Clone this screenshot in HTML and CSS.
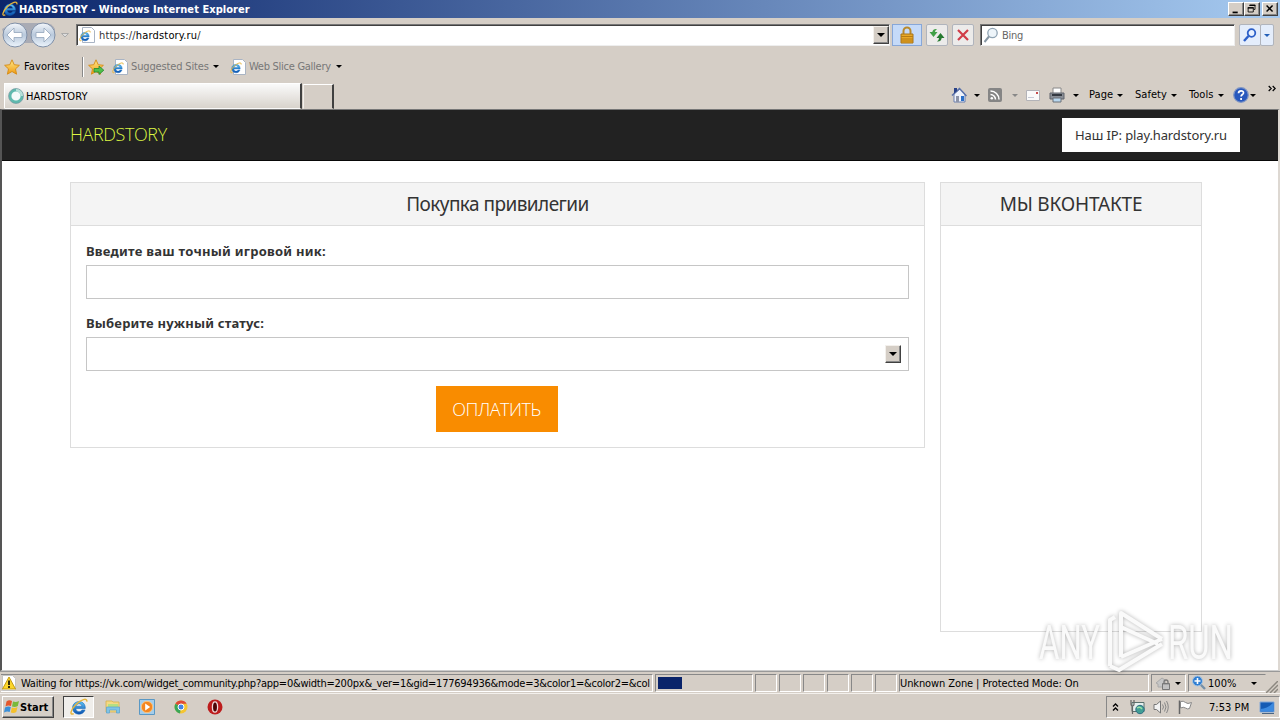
FILE: index.html
```html
<!DOCTYPE html>
<html lang="ru">
<head>
<meta charset="utf-8">
<title>HARDSTORY - Windows Internet Explorer</title>
<link rel="stylesheet" href="styles.css">
</head>
<body>
<svg class="defs" width="0" height="0">
  <defs>
    <linearGradient id="globe" x1="0" y1="0" x2="0" y2="1"><stop offset="0" stop-color="#5ec4f5"/><stop offset="1" stop-color="#0a4fae"/></linearGradient>
    <linearGradient id="gold" x1="0" y1="0" x2="0" y2="1"><stop offset="0" stop-color="#ffe98a"/><stop offset="1" stop-color="#f09a10"/></linearGradient>
    <linearGradient id="orb" x1="0" y1="0" x2="0" y2="1"><stop offset="0" stop-color="#f4f7fb"/><stop offset=".5" stop-color="#b9c9dc"/><stop offset="1" stop-color="#edf5fc"/></linearGradient>
    <symbol id="ie" viewBox="0 0 16 16">
      <path d="M13.6 9.3H5.2c.2 3.4 4.4 3.6 5.4 1.3h2.8C11.5 16.200 2.300 15.600 2.300 8.700 2.300 1.600 13.900.8 13.600 9.300zM5.300 7.300h5.300C10.300 4.300 5.700 4.400 5.300 7.300z" fill="url(#globe)" stroke="#1465b8" stroke-width=".5"/>
      <path d="M3.300 13.800C-.7 16 .5 10.300 5.300 5.700 9.500 1.700 15.600-.8 14.900 3.300" fill="none" stroke="#e6b53c" stroke-width="1.300"/>
    </symbol>
    <symbol id="iepage" viewBox="0 0 16 16"><path d="M3.500.5h9l3 3v12h-12z" fill="#fff" stroke="#a9b4c4"/><svg x="0" y="3" width="12" height="12" viewBox="0 0 16 16"><use href="#ie"/></svg></symbol>
    <symbol id="star" viewBox="0 0 16 16"><path d="M8 .8l2.200 4.900 5.200.6-3.900 3.600 1.100 5.300L8 12.500l-4.600 2.700 1.100-5.300L.6 6.300l5.200-.6z" fill="url(#gold)" stroke="#d58a14" stroke-width=".9"/></symbol>
  </defs>
</svg>

<header class="titlebar">
  <svg class="i16" viewBox="0 0 16 16"><use href="#ie"/></svg>
  <span class="title">HARDSTORY - Windows Internet Explorer</span>
  <div class="winbtns">
    <svg class="winbtn" viewBox="0 0 16 14"><path d="M4 10h6v2H4z"/></svg>
    <svg class="winbtn" viewBox="0 0 16 14"><path d="M5.500 3v-.5h6v5H10M3.500 5.500h6v5h-6z" fill="none" stroke="#000"/><path d="M5 2h7v1.500H5zM3 5h7v1.500H3z"/></svg>
    <svg class="winbtn gap" viewBox="0 0 16 14"><path d="M4 3l7 7M11 3l-7 7" stroke="#000" stroke-width="1.700"/></svg>
  </div>
</header>

<div class="address-row">
  <svg class="nav" viewBox="0 0 66 28">
    <path d="M12 2h32q7 0 10 6l-2 14H6L1 8z" fill="#a9abb4"/>
    <g fill="url(#orb)" stroke="#8090a8"><circle cx="14" cy="14" r="12"/><circle cx="42" cy="14" r="12"/></g>
    <g fill="#fff" stroke="#93a4bb" stroke-width=".8"><path d="M6 14l7-7v4.500h8v5h-8V21z"/><path d="M50 14l-7-7v4.500h-8v5h8V21z"/></g>
  </svg>
  <svg class="navcaret" viewBox="0 0 8 5"><path d="M.5.5h7L4 4z" fill="#ddd" stroke="#aaa"/></svg>
  <div class="field address">
    <svg class="i16" viewBox="0 0 16 16"><use href="#iepage"/></svg>
    <span class="url"><i>https://</i>hardstory.ru<i>/</i></span>
    <div class="drop"><b class="caret"></b></div>
  </div>
  <div class="tbtn lock"><svg width="16" height="18" viewBox="0 0 16 18"><path d="M4.500 9V5a3.500 3.500 0 017 0v4" fill="none" stroke="#b98a2c" stroke-width="2"/><path d="M2 8h12v9H2z" fill="#e9a825" stroke="#a8741a"/><path d="M2 10.500h12M2 13h12M2 15h12" stroke="#b67b14"/></svg></div>
  <div class="tbtn"><svg width="16" height="16" viewBox="0 0 16 16"><path d="M8 2Q4 1.500 3.300 5H.5l4 5 4-5H6q0-1.500 2-3z" fill="#41a047"/><path d="M8 14.500q4 .5 4.700-3.500h2.800l-4-5-4 5H10q0 2-2 3.500z" fill="#267a30"/></svg></div>
  <div class="tbtn"><svg width="16" height="16" viewBox="0 0 16 16"><path d="M3 3l10 10M13 3L3 13" stroke="#d03c48" stroke-width="2.200"/></svg></div>
  <div class="field search">
    <svg class="i16" viewBox="0 0 16 16"><circle cx="9.500" cy="6" r="4.700" fill="#eef5fa" stroke="#90a4b4" stroke-width="1.300"/><path d="M6 9.500L1.500 15" stroke="#8797a4" stroke-width="2"/></svg>
    <span>Bing</span>
  </div>
  <div class="tbtn go"><svg width="16" height="16" viewBox="0 0 16 16"><circle cx="9.500" cy="6" r="3.800" fill="#e8f1ff" stroke="#2c5fc8" stroke-width="1.800"/><path d="M6.500 9L2 14" stroke="#2c5fc8" stroke-width="2.400"/></svg></div>
  <div class="tbtn godrop"><b class="caret blue"></b></div>
</div>

<div class="fav-row">
  <svg class="i16" viewBox="0 0 16 16"><use href="#star"/></svg>
  <span class="fav-label">Favorites</span>
  <b class="sep"></b>
  <svg class="i16 add" viewBox="0 0 16 16"><use href="#star"/><path d="M6 9.500h5V7l4.800 4.200L11 15.500V13H6z" fill="#4fc04a" stroke="#23862c" stroke-width=".8"/></svg>
  <svg class="i16 link" viewBox="0 0 16 16"><use href="#iepage"/></svg>
  <span class="sites">Suggested Sites</span><b class="caret"></b>
  <svg class="i16 slice" viewBox="0 0 16 16"><use href="#iepage"/></svg>
  <span class="gallery">Web Slice Gallery</span><b class="caret"></b>
</div>

<div class="tab-row">
  <div class="tab"><svg class="i16" viewBox="0 0 16 16"><circle cx="8" cy="8" r="6" fill="#f4fafa" stroke="#5fb9ae" stroke-width="2.800"/><path d="M8 2a6 6 0 016 6" fill="none" stroke="#b7e0da" stroke-width="2.800"/><circle cx="8" cy="8" r="7.500" fill="none" stroke="#71919b" stroke-width=".6"/></svg><span>HARDSTORY</span></div>
  <div class="newtab"></div>
  <div class="commands">
    <svg class="i16" viewBox="0 0 16 16"><path d="M3 7l6-5 5 5v8H3z" fill="#eef2fb" stroke="#6a7fae"/><path d="M1 8.500L8.500 1.500 15.500 9" fill="none" stroke="#5870a8" stroke-width="1.500"/><path d="M3 1h3v3L3 6.500z" fill="#2a4288"/><path d="M5 9h3v6H5z" fill="#8c93a8"/><path d="M10 9h3v5h-3z" fill="#2a6fc8"/></svg>
    <b class="caret c1"></b>
    <svg class="rss" viewBox="0 0 14 14"><rect width="14" height="14" rx="2" fill="#858585"/><circle cx="3.800" cy="10.200" r="1.300" fill="#fff"/><path d="M2.500 6.500a5 5 0 015 5M2.500 3a8.500 8.500 0 018.500 8.500" fill="none" stroke="#fff" stroke-width="1.500"/></svg>
    <b class="caret c2"></b>
    <svg class="mail" viewBox="0 0 14 11"><path d="M.5.5h13v10H.5z" fill="#fafafa" stroke="#b3b3b8"/><path d="M2 7.500h6" stroke="#c6cad6"/><path d="M10 2h2v2h-2z" fill="#c64c4c"/></svg>
    <svg class="printer" viewBox="0 0 16 16"><path d="M4 1h8v6H4z" fill="#fff" stroke="#888"/><path d="M1 6h14v6H1z" fill="#898e96" stroke="#60656d"/><path d="M3 8h10" stroke="#343941" stroke-width="2"/><path d="M4 11h8v4H4z" fill="#b8d7ef" stroke="#6a7178"/></svg>
    <b class="caret c3"></b>
    <span class="page-menu">Page</span><b class="caret"></b>
    <span class="safety-menu">Safety</span><b class="caret"></b>
    <span class="tools-menu">Tools</span><b class="caret"></b>
    <svg class="i16 help" viewBox="0 0 16 16"><circle cx="8" cy="8" r="7.300" fill="#2858bd" stroke="#8096c4" stroke-width="1.200"/><path d="M5.500 6.200C5.600 3 10.800 3.200 10.500 6c-.1 1.500-2.400 1.600-2.400 3.400M8.100 11v2" fill="none" stroke="#fff" stroke-width="1.700"/></svg>
    <b class="caret c4"></b>
    <svg class="more" viewBox="0 0 8 7"><path d="M.7 1l2.500 2.500L.7 6M4.700 1l2.500 2.500L4.700 6" fill="none" stroke="#000" stroke-width="1.200"/></svg>
  </div>
</div>

<main class="viewport">
  <nav class="navbar"><a class="brand">HARDSTORY</a><div class="ip"><span>Наш IP: play.hardstory.ru</span></div></nav>
  <div class="columns">
    <section class="panel buy">
      <h3><span>Покупка привилегии</span></h3>
      <form>
        <label class="l1">Введите ваш точный игровой ник:</label>
        <div class="control"></div>
        <label class="l2">Выберите нужный статус:</label>
        <div class="control select"><div class="drop"><b class="caret"></b></div></div>
        <div class="pay"><span>ОПЛАТИТЬ</span></div>
      </form>
    </section>
    <section class="panel vk"><h3><span>МЫ ВКОНТАКТЕ</span></h3></section>
  </div>
  <svg class="watermark" viewBox="0 0 220 70">
    <g class="wm">
      <path class="wm-shape" d="M86 57V11l5-3M97 48V4l41 26M97 18l37 17M97 48l41-18M86 57l9 4 43-26"/>
      <text x="15" y="50" textLength="61" lengthAdjust="spacingAndGlyphs">ANY</text>
      <text x="144" y="50" textLength="65" lengthAdjust="spacingAndGlyphs">RUN</text>
    </g>
  </svg>
</main>

<div class="statusbar">
  <div class="cell message"><svg class="i16" viewBox="0 0 16 16"><path d="M1.500.5h10l3 3v12h-13z" fill="#fff" stroke="#c4c4c4"/><path d="M8 2l6.500 12h-13z" fill="#fcd62b" stroke="#c39a12"/><path d="M8 5.500v4.500M8 11v2" stroke="#000" stroke-width="1.600"/></svg><span>Waiting for https://vk.com/widget_community.php?app=0&amp;width=200px&amp;_ver=1&amp;gid=177694936&amp;mode=3&amp;color1=&amp;color2=&amp;col</span></div>
  <div class="cell progress"><b></b></div>
  <div class="cell sm"></div><div class="cell sm"></div><div class="cell sm"></div><div class="cell sm"></div><div class="cell sm"></div><div class="cell sm"></div>
  <div class="cell zone"><span>Unknown Zone | Protected Mode: On</span></div>
  <div class="cell protect"><svg class="i16" viewBox="0 0 16 16"><path d="M1 8l6-5 3 2v7H3V9z" fill="#c6c6c6" stroke="#aaa"/><path d="M9 9V7a2 2 0 014 0v2" fill="none" stroke="#777" stroke-width="1.300"/><path d="M7.500 8.500h7v6h-7z" fill="#a6a6a6" stroke="#777"/><path d="M8 11h6M8 13h6" stroke="#ddd"/></svg><b class="caret"></b></div>
  <div class="cell zoomlevel"><svg class="i16" viewBox="0 0 16 16"><path d="M9 9l5 5" stroke="#7690a8" stroke-width="2.400"/><circle cx="6.500" cy="6" r="5" fill="#2f7ed2" stroke="#a9c5e0"/><path d="M6.500 3v6M3.500 6h6" stroke="#fff" stroke-width="1.600"/></svg><span>100%</span><b class="caret"></b></div>
  <svg class="grip" viewBox="0 0 12 12"><path d="M0 12L12 0M4 12l8-8M8 12l4-4" stroke="#8c8880" stroke-width="1.500"/></svg>
</div>

<footer class="taskbar">
  <div class="start"><svg width="16" height="16" viewBox="0 0 16 16"><path d="M2.500 2.500Q5 .5 8 2L7 7Q4 6 1.500 7.500z" fill="#e4572c"/><path d="M9 2.500q3 1 6-.5l-1.200 5Q11 8.500 8 7.500z" fill="#7ab93b"/><path d="M1 8.500Q4 7 6.800 8L5.700 13Q3 12 0 13.500z" fill="#3a8fd8"/><path d="M7.800 8.500q3 1 5.700-.5l-1.200 5q-2.500 1.500-5.500.5z" fill="#f5c02b"/></svg><span>Start</span></div>
  <div class="task active"><svg width="18" height="18" viewBox="0 0 16 16"><use href="#ie"/></svg></div>
  <svg class="i16 explorer" viewBox="0 0 16 16"><path d="M1 2h6l1 1h6v10H1z" fill="#f4d983" stroke="#d5b04f" stroke-width=".8"/><path d="M3 5h10v3H3z" fill="#b4df83"/><path d="M1.500 8h13v6h-3v-3h-7v3h-3z" fill="#7ec3e8" stroke="#58a2cf" stroke-width=".7"/></svg>
  <svg class="i16 player" viewBox="0 0 16 16"><path d="M.5.500h15v15H.5z" fill="#a5cdea" stroke="#5a98c4"/><circle cx="8" cy="8" r="5.700" fill="#f48620" stroke="#fbc37d"/><path d="M6.200 4.500l5 3.500-5 3.500z" fill="#fff"/></svg>
  <svg class="i16 chrome" viewBox="0 0 16 16"><circle cx="8" cy="8" r="6.500" fill="#f5c531"/><path d="M8 8L2.400 4.700A6.500 6.500 0 0113.600 4.700H8z" fill="#df4937"/><path d="M8 8l-1 6.400A6.500 6.500 0 012.400 4.700z" fill="#3aa657"/><circle cx="8" cy="8" r="3" fill="#4384e4" stroke="#fff"/></svg>
  <svg class="i16 opera" viewBox="0 0 16 16"><circle cx="8" cy="8" r="7.500" fill="#bd1c1c"/><ellipse cx="8" cy="8" rx="2.600" ry="5.200" fill="#4c0505" stroke="#f0dada" stroke-width="1.300"/></svg>
  <div class="tray">
    <svg class="chev" viewBox="0 0 7 8"><path d="M1 3.500L3.500 1 6 3.500M1 7.500L3.500 5 6 7.500" fill="none" stroke="#000" stroke-width="1.300"/></svg>
    <svg class="i16 network" viewBox="0 0 16 16"><path d="M3 3.500h12v9H3z" fill="#e6f0ee" stroke="#59706d"/><path d="M2 1v4q0 2 1.500 2v8M5 1v4q0 2-1.500 2" fill="none" stroke="#666" stroke-width="1.200"/><circle cx="11" cy="10.500" r="4.200" fill="#419e94" stroke="#2e6d83"/><path d="M8 9q3-2 5 1" fill="none" stroke="#9be0a6" stroke-width="1.500"/></svg>
    <svg class="i16 sound" viewBox="0 0 16 16"><path d="M1 5.500h2.500L7.500 2v12L3.500 10.500H1z" fill="#f2f2f2" stroke="#777"/><path d="M9.500 5.500q2 2.500 0 5M11.500 3.500q3 4.500 0 9M13.500 2q3.500 6 0 12" fill="none" stroke="#888"/></svg>
    <svg class="i16 flag" viewBox="0 0 16 16"><path d="M2.500 15V1.500" stroke="#666" stroke-width="1.500"/><path d="M3.500 2.500q3-1 5 1t6 0l-2 6q-2 1-4-.5t-5 0z" fill="#fff" stroke="#888"/></svg>
    <span class="clock">7:53 PM</span>
    <svg class="i16 desk" viewBox="0 0 16 16"><path d="M1 3h14v10H1z" fill="#155bb4" stroke="#83a9d8"/><path d="M1.500 10Q9 9 14.500 3.500v9h-13z" fill="#3c8ae0"/><path d="M3 14.500h12" stroke="#4b6582"/></svg>
  </div>
</footer>
</body>
</html>
```
FILE: styles.css
```css
* { box-sizing: border-box; }
body {
  margin: 0; width: 1280px; height: 720px; overflow: hidden;
  display: flex; flex-direction: column;
  background: #d5cec6; color: #000;
  font: 11px/14px "DejaVu Sans Condensed", "DejaVu Sans", sans-serif;
  letter-spacing: 0.05px;
}
span, a, label { white-space: nowrap; }
svg { display: block; flex: none; }
.defs { position: absolute; }
.i16 { width: 16px; height: 16px; }
.caret { flex: none; width: 0; height: 0; border: 3px solid transparent; border-top-color: #000; border-bottom: 0; }

.titlebar { height: 18px; flex: none; display: flex; align-items: center; padding: 0 2px; background: linear-gradient(90deg, #0a246a, #a6caf0); color: #fff; font-weight: bold; }
.title { margin-left: 1px; padding-top: 1px; }
.winbtns { display: flex; margin-left: auto; }
.winbtn { width: 16px; height: 14px; background: #d5cec6; border: 1px solid; border-color: #fff #404040 #404040 #fff; box-shadow: inset -1px -1px #888; }
.gap { margin-left: 2px; }

.address-row { height: 34px; flex: none; display: flex; align-items: center; padding-left: 1px; }
.nav { width: 66px; height: 28px; margin-right: -6px; }
.navcaret { width: 8px; height: 5px; margin-right: 7px; }
.field { display: flex; align-items: center; height: 22px; background: #fff; border: 1px solid; border-color: #777 #eee #eee #777; box-shadow: inset 1px 1px #404040; }
.address { width: 814px; padding-left: 2px; }
.url { margin-left: 4px; padding-top: 2px; letter-spacing: 0.17px; }
.url i { font-style: normal; color: #333; }
.drop { display: flex; align-items: center; justify-content: center; width: 16px; height: 18px; background: #d5cec6; border: 1px solid; border-color: #f3f0ec #404040 #404040 #f3f0ec; box-shadow: inset -1px -1px #888; margin-left: auto; }
.drop .caret { border-width: 4px; border-bottom: 0; }
.tbtn { display: flex; align-items: center; justify-content: center; width: 22px; height: 22px; margin-left: 4px; border: 1px solid #b0b4bc; border-radius: 2px; background: #ecebea; }
.lock { width: 30px; margin-left: 2px; background: #c5daf8; border-color: #87a7d8; border-radius: 0; }
.search { width: 255px; margin-left: 6px; padding-left: 2px; color: #666; }
.search span { margin-left: 3px; padding-top: 2px; letter-spacing: -0.3px; }
.go { background: #e4edfb; }
.godrop { width: 14px; margin-left: -1px; background: #e4edfb; }
.blue { border-top-color: #2460b8; }

.fav-row { height: 29px; flex: none; display: flex; align-items: center; padding: 0 0 0 4px; }
.fav-label { width: 58px; margin-left: 4px; letter-spacing: 0.1px; }
.sep { width: 2px; height: 20px; border-left: 1px solid #888; border-right: 1px solid #fff; }
.add { margin-left: 4px; }
.link { margin-left: 8px; }
.sites { width: 82px; margin-left: 3px; color: #777; letter-spacing: -0.15px; }
.slice { margin-left: 11px; }
.gallery { width: 87px; margin-left: 3px; color: #777; letter-spacing: -0.27px; }

.tab-row { height: 28px; flex: none; display: flex; align-items: flex-end; padding-left: 4px; }
.tab { width: 298px; height: 26px; display: flex; align-items: center; padding-left: 3px; background: linear-gradient(#fafafa, #d8d3cc); border: 1px solid; border-color: #fff #404040 transparent #fff; border-right-width: 2px; }
.tab span { margin-left: 2px; padding-top: 1px; }
.newtab { width: 31px; height: 25px; margin-left: 1px; border: 1px solid; border-color: #fff #404040 transparent #f3f0ec; border-right-width: 2px; }
.commands { display: flex; align-items: center; height: 28px; margin-left: 617px; }
.c1 { margin-left: 7px; }
.rss { width: 14px; height: 14px; margin-left: 8px; }
.c2 { margin-left: 10px; border-top-color: #888; }
.mail { width: 14px; height: 11px; margin-left: 8px; }
.printer { width: 16px; height: 16px; margin-left: 9px; }
.c3 { margin-left: 8px; }
.page-menu { width: 28px; margin-left: 10px; }
.safety-menu { width: 36px; margin-left: 12px; }
.tools-menu { width: 29px; margin-left: 12px; }
.help { margin-left: 9px; }
.c4 { margin-left: 1px; }
.more { width: 8px; height: 7px; margin: -14px 0 0 12px; }

.viewport { position: relative; height: 562px; flex: none; background: #fff; border: solid; border-width: 1px 2px 1px 2px; border-color: #777 #ddd8d2 #ccc #555; font-family: "Noto Sans", "Open Sans", sans-serif; letter-spacing: 0; color: #333; }
.navbar { display: flex; align-items: center; height: 51px; background: #222; border-bottom: 1px solid #080808; padding: 0 38px 0 68px; }
.brand { color: #dcf544; font: 300 18px/20px "Open Sans", sans-serif; letter-spacing: -0.4px; padding-bottom: 2px; }
.ip { display: flex; align-items: center; justify-content: center; width: 178px; height: 34px; margin-left: auto; background: #fff; color: #333; font-size: 13px; letter-spacing: -0.12px; }
.columns { display: flex; align-items: flex-start; gap: 15px; padding: 21px 0 0 68px; }
.panel { border: 1px solid #ddd; }
.buy { width: 855px; height: 266px; }
.vk { width: 262px; height: 450px; }
h3 { display: flex; align-items: center; justify-content: center; margin: 0; height: 43px; background: #f4f4f4; border-bottom: 1px solid #ddd; font-size: 19px; font-weight: 400; line-height: 24px; letter-spacing: -0.2px; }
.buy h3 { letter-spacing: -0.55px; }
form { display: flex; flex-direction: column; padding: 15px; }
label { display: block; height: 20px; margin-bottom: 4px; font-size: 13px; font-weight: 700; line-height: 20px; letter-spacing: 0.25px; }
.control { height: 34px; border: 1px solid #c6c6c6; }
.l2 { margin-top: 14px; letter-spacing: 0.18px; }
.select { display: flex; align-items: center; padding-right: 7px; }
.pay { display: flex; align-items: center; justify-content: center; align-self: center; width: 122px; height: 46px; margin: 15px 2px 0 0; padding-bottom: 1px; background: #f98c00; color: #fff; font: 300 18px/24px "Open Sans", sans-serif; letter-spacing: -0.5px; }
.watermark { position: absolute; left: 1022px; top: 499px; width: 220px; height: 70px; overflow: visible; }
.wm { filter: drop-shadow(0 0 2px rgba(0,0,0,.3)); }
.wm-shape { fill: none; stroke: #fafafa; stroke-width: 4; stroke-linejoin: round; }
.wm text { font: 48px "Roboto", sans-serif; fill: #fafafa; }

.statusbar { height: 23px; flex: none; display: flex; align-items: center; padding: 1px 0 0 1px; border-top: 1px solid #999; border-bottom: 1px solid #f3f0ec; }
.cell { display: flex; align-items: center; height: 18px; border: 1px solid; border-color: #888 #fff #fff #888; margin-right: 2px; overflow: hidden; }
.cell span { padding-top: 1px; }
.message { width: 652px; border-left: 0; }
.message span { margin-left: 4px; letter-spacing: -0.24px; }
.progress { width: 98px; padding-left: 2px; }
.progress b { width: 24px; height: 12px; background: #0a246a; }
.sm { width: 22px; }
.zone { width: 250px; letter-spacing: -0.1px; }
.protect { width: 35px; padding-left: 3px; }
.protect .caret { margin-left: 4px; }
.zoomlevel { width: 78px; padding-left: 2px; border-right-color: transparent; margin: 0; }
.zoomlevel span { width: 37px; margin-left: 1px; }
.zoomlevel .caret { margin-left: 6px; }
.grip { width: 12px; height: 12px; margin-left: 0; align-self: flex-end; }

.taskbar { height: 26px; flex: none; display: flex; align-items: center; padding-left: 2px; }
.start { display: flex; align-items: center; width: 52px; height: 22px; padding-left: 1px; border: 1px solid; border-color: #fff #404040 #404040 #fff; box-shadow: inset -1px -1px #888; font-weight: bold; }
.start span { margin-left: 0; padding-top: 1px; }
.task { display: flex; align-items: center; justify-content: center; width: 31px; height: 22px; margin-left: 9px; background: #f0eeeb; border: 1px solid; border-color: #404040 #fff #fff #404040; }
.explorer { margin-left: 11px; }
.player, .chrome, .opera { margin-left: 18px; }
.tray { display: flex; align-items: center; width: 174px; height: 22px; margin-left: auto; border: 1px solid; border-color: #888 #fff #fff #888; padding-left: 5px; }
.chev { width: 7px; height: 8px; }
.network { margin-left: 10px; }
.sound, .flag { margin-left: 8px; }
.clock { width: 42px; margin-left: 16px; padding-top: 1px; }
.desk { margin-left: 8px; }
```
